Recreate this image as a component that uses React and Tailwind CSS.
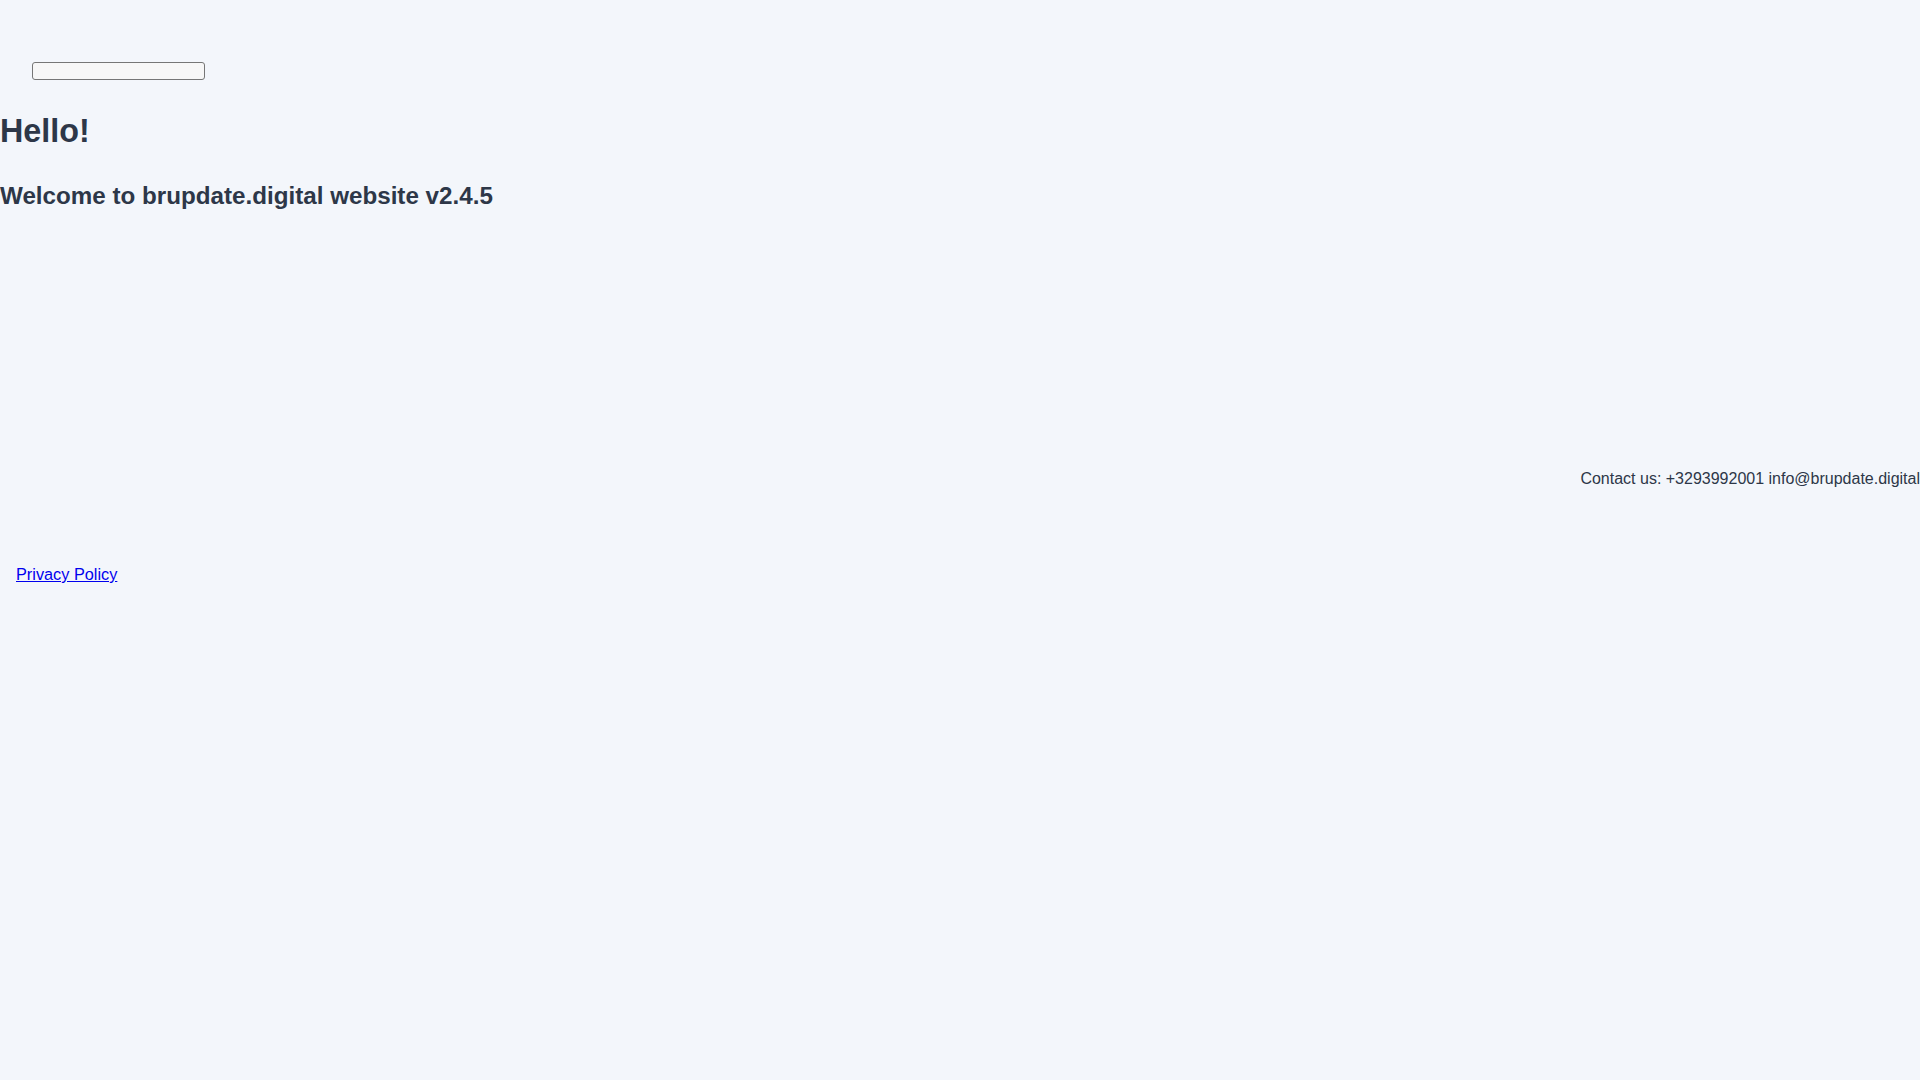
const App = () => (
    <div className="min-h-screen bg-[#f3f6fb] font-['Liberation_Sans',Arial,sans-serif] text-[#2d3748]">
        <header className="pl-[32px] pt-[62px]">
            <button
                type="button"
                aria-label="menu"
                className="block h-[18px] w-[173px] rounded-[3px] border border-[#767676] bg-[#f7f7f7]"
            />
        </header>

        <main>
            <h1 className="mt-[33px] text-[32.3px] font-bold leading-[36px]">Hello!</h1>
            <h2 className="mt-[33px] text-[24.2px] font-bold leading-[28px]">
                Welcome to brupdate.digital website v2.4.5
            </h2>
        </main>

        <footer>
            <p className="mt-[260px] text-right text-[16px] leading-[18px]">
                Contact us: +3293992001 info@brupdate.digital
            </p>
            <div className="mt-[75px] pl-[16px]">
                <a href="#privacy" className="text-[16.3px] leading-[18px] text-[#0000ee] underline">
                    Privacy Policy
                </a>
            </div>
        </footer>
    </div>
);

export default App;
